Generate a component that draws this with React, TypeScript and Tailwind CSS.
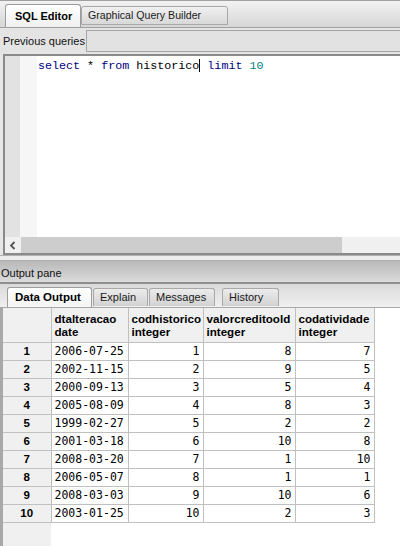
import React from 'react';

const rows: [number, string, number, number, number][] = [
  [1, '2006-07-25', 1, 8, 7],
  [2, '2002-11-15', 2, 9, 5],
  [3, '2000-09-13', 3, 5, 4],
  [4, '2005-08-09', 4, 8, 3],
  [5, '1999-02-27', 5, 2, 2],
  [6, '2001-03-18', 6, 10, 8],
  [7, '2008-03-20', 7, 1, 10],
  [8, '2006-05-07', 8, 1, 1],
  [9, '2008-03-03', 9, 10, 6],
  [10, '2003-01-25', 10, 2, 3],
];

const columns = [
  { name: 'dtalteracao', type: 'date', w: 'w-[77px]' },
  { name: 'codhistorico', type: 'integer', w: 'w-[75px]' },
  { name: 'valorcreditoold', type: 'integer', w: 'w-[92px]' },
  { name: 'codatividade', type: 'integer', w: 'w-[79px]' },
];

const ui = "font-['Liberation_Sans',Arial,sans-serif]";
const mono = "font-['DejaVu_Sans_Mono',monospace]";

function OutTab({ label, active, w }: { label: string; active?: boolean; w: string }) {
  if (active) {
    return (
      <div className={`${w} h-[20px] border border-b-0 border-[#9c9c9c] rounded-t-[3px] bg-gradient-to-b from-white to-[#f4f4f4] flex items-center pl-[7px] text-[11.5px] font-bold text-black`}>
        {label}
      </div>
    );
  }
  return (
    <div className={`${w} h-[18px] mb-[1px] border border-b-0 border-[#a8a8a8] rounded-t-[3px] bg-gradient-to-b from-[#ececec] to-[#d2d2d2] flex items-center pl-[6px] text-[11px] text-[#1a1a1a]`}>
      {label}
    </div>
  );
}

export default function App() {
  return (
    <div className={`${ui} w-[400px] h-[546px] overflow-hidden flex flex-col bg-[#e6e6e6] text-black`}>
      {/* top tabs */}
      <div className="h-[28px] border-t border-[#8c8c8c] bg-gradient-to-b from-[#f2f2f2] to-[#d6d6d6] border-b border-[#a0a0a0] flex items-end pl-[5px]">
        <div className="w-[76px] h-[23px] border border-b-0 border-[#9c9c9c] rounded-t-[3px] bg-gradient-to-b from-white to-[#f0f0f0] flex items-center pl-[9px] pt-[1px] text-[11px] font-bold">
          SQL Editor
        </div>
        <div className="w-[147px] h-[19px] mb-[2px] border border-[#a8a8a8] rounded-t-[3px] bg-gradient-to-b from-[#f0f0f0] to-[#d8d8d8] flex items-center pl-[6px] text-[10.6px] text-[#1a1a1a]">
          Graphical Query Builder
        </div>
      </div>

      {/* previous queries */}
      <div className="h-[26px] flex items-center bg-[#e4e4e4]">
        <span className="pl-[3px] w-[86px] text-[11px] text-[#111]">Previous queries</span>
        <div className="flex-1 h-[22px] border border-[#a4a4a4] border-r-0 bg-[#e2e2e2]" />
      </div>

      {/* editor */}
      <div className="h-[201px] ml-[3px] border-2 border-r-0 border-[#8a8a8a] bg-white flex flex-col">
        <div className="flex-1 flex">
          <div className="w-[15px] bg-[#e2e2e2]" />
          <div className="w-[17px] bg-[#f6f6f6] bg-[radial-gradient(#e4e4e4_0.6px,transparent_0.7px)] bg-[length:2px_2px]" />
          <div className="font-['Liberation_Mono',monospace] text-[11.7px] pl-[1px] pt-[3px] leading-[14px] flex items-start">
            <span className="text-[#00007f]">select</span>
            <span className="whitespace-pre"> * </span>
            <span className="text-[#00007f]">from</span>
            <span className="whitespace-pre"> historico</span>
            <span className="w-px h-[13px] bg-black" />
            <span className="whitespace-pre"> </span>
            <span className="text-[#00007f]">limit</span>
            <span className="whitespace-pre"> </span>
            <span className="text-[#007f7f]">10</span>
          </div>
        </div>
        <div className="h-[16px] flex">
          <div className="w-[16px] bg-[#f0f0f0] flex items-center justify-center">
            <svg width="8" height="9" viewBox="0 0 8 9">
              <path d="M5.5 1 L2 4.5 L5.5 8" stroke="#555" strokeWidth="1.8" fill="none" />
            </svg>
          </div>
          <div className="w-[321px] bg-[#cdcdcd]" />
          <div className="flex-1 bg-[#f0f0f0]" />
        </div>
      </div>

      {/* splitter */}
      <div className="h-[6px] bg-[#ececec] border-t border-[#b0b0b0] border-b border-[#9a9a9a]" />

      {/* output pane header */}
      <div className="h-[23px] bg-gradient-to-b from-[#b8b8b8] to-[#dcdcdc] border-b-2 border-[#8e8e8e] flex items-center pl-[1px] pt-[3px] text-[11px] text-[#111]">
        Output pane
      </div>

      {/* output tabs */}
      <div className="h-[24px] bg-gradient-to-b from-[#dadada] to-[#f0f0f0] border-b border-[#a8a8a8] flex items-end pl-[7px] gap-[1px]">
        <OutTab label="Data Output" active w="w-[85px]" />
        <OutTab label="Explain" w="w-[55px]" />
        <OutTab label="Messages" w="w-[66px]" />
        <div className="w-[5px]" />
        <OutTab label="History" w="w-[57px]" />
      </div>

      {/* table */}
      <div className="flex-1 flex flex-col bg-white border-l-[3px] border-[#a8a8a8]">
        <table className="border-collapse table-fixed w-[371px]">
          <thead>
            <tr className="h-[34px]">
              <th className="w-[48px] bg-[#f0f0f0] border border-l-0 border-t-0 border-[#c0c0c0]" />
              {columns.map((c) => (
                <th
                  key={c.name}
                  className={`${c.w} bg-[#f0f0f0] border border-t-0 border-[#c0c0c0] text-left align-middle pl-[3px] text-[11.6px] font-bold leading-[13px] text-black`}
                >
                  <div>{c.name}</div>
                  <div>{c.type}</div>
                </th>
              ))}
            </tr>
          </thead>
          <tbody>
            {rows.map((r) => (
              <tr key={r[0]} className="h-[18px]">
                <td className="bg-[#f0f0f0] border border-l-0 border-[#c0c0c0] text-center text-[11.5px] font-bold leading-[16px]">
                  {r[0]}
                </td>
                <td className={`${mono} border border-[#c0c0c0] pl-[3px] text-[11.5px] leading-[16px]`}>{r[1]}</td>
                <td className={`${mono} border border-[#c0c0c0] pr-[3px] text-right text-[11.5px] leading-[16px]`}>{r[2]}</td>
                <td className={`${mono} border border-[#c0c0c0] pr-[3px] text-right text-[11.5px] leading-[16px]`}>{r[3]}</td>
                <td className={`${mono} border border-[#c0c0c0] pr-[3px] text-right text-[11.5px] leading-[16px]`}>{r[4]}</td>
              </tr>
            ))}
          </tbody>
        </table>
        <div className="flex-1 flex">
          <div className="w-[48px] bg-[#f0f0f0]" />
        </div>
      </div>
    </div>
  );
}
